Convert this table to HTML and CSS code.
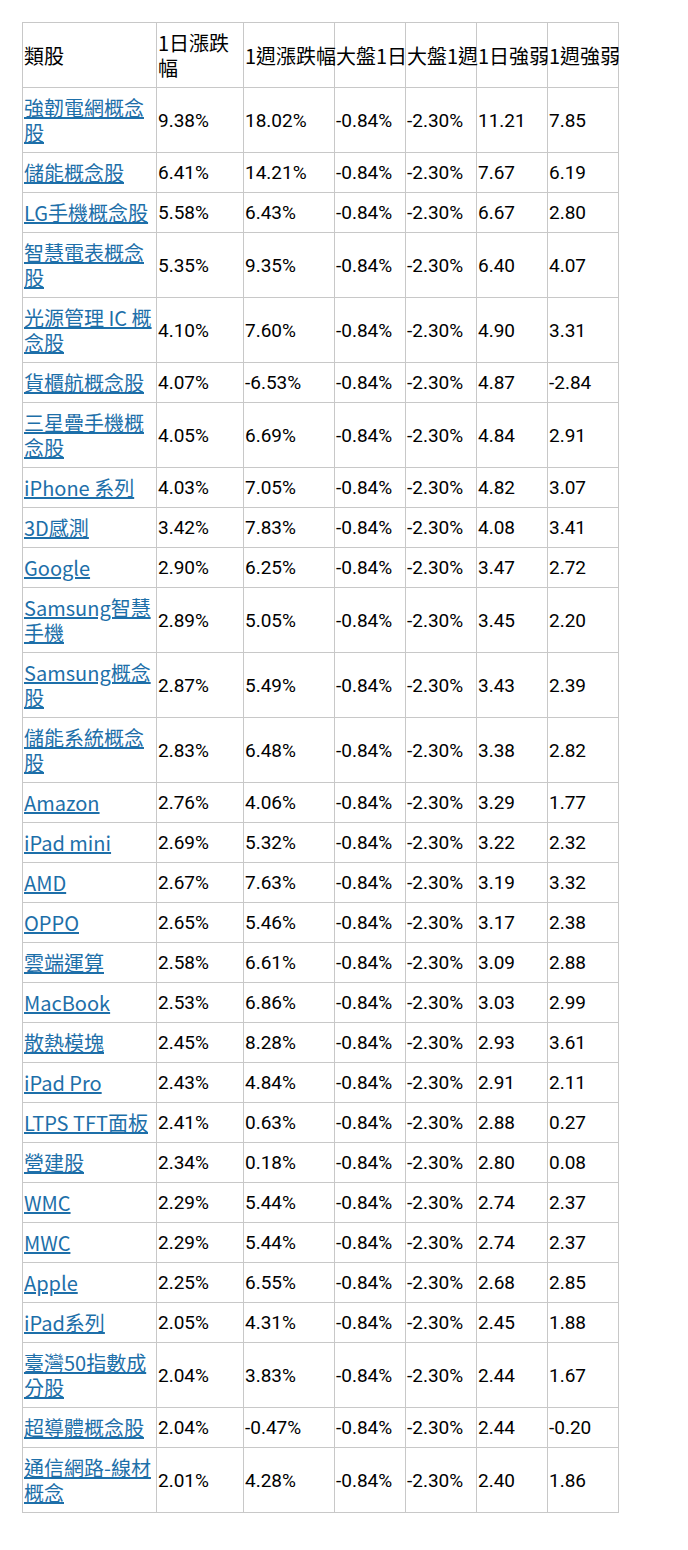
FILE: index.html
```html
<!DOCTYPE html>
<html lang="zh-Hant">
<head>
<meta charset="utf-8">
<title>類股強弱</title>
<link rel="stylesheet" href="styles.css">
</head>
<body>
<div class="page">
<table class="sector-table">
<colgroup>
<col class="c-name"><col class="c-d1"><col class="c-w1"><col class="c-s"><col class="c-s"><col class="c-s"><col class="c-s">
</colgroup>
<thead>
<tr><th>類股</th><th class="wrap">1日漲跌幅</th><th>1週漲跌幅</th><th>大盤1日</th><th>大盤1週</th><th>1日強弱</th><th>1週強弱</th></tr>
</thead>
<tbody>
<tr><td><a href="#">強韌電網概念股</a></td><td>9.38%</td><td>18.02%</td><td>-0.84%</td><td>-2.30%</td><td>11.21</td><td>7.85</td></tr>
<tr><td><a href="#">儲能概念股</a></td><td>6.41%</td><td>14.21%</td><td>-0.84%</td><td>-2.30%</td><td>7.67</td><td>6.19</td></tr>
<tr><td><a href="#">LG手機概念股</a></td><td>5.58%</td><td>6.43%</td><td>-0.84%</td><td>-2.30%</td><td>6.67</td><td>2.80</td></tr>
<tr><td><a href="#">智慧電表概念股</a></td><td>5.35%</td><td>9.35%</td><td>-0.84%</td><td>-2.30%</td><td>6.40</td><td>4.07</td></tr>
<tr><td><a href="#">光源管理 IC 概念股</a></td><td>4.10%</td><td>7.60%</td><td>-0.84%</td><td>-2.30%</td><td>4.90</td><td>3.31</td></tr>
<tr><td><a href="#">貨櫃航概念股</a></td><td>4.07%</td><td>-6.53%</td><td>-0.84%</td><td>-2.30%</td><td>4.87</td><td>-2.84</td></tr>
<tr><td><a href="#">三星疊手機概念股</a></td><td>4.05%</td><td>6.69%</td><td>-0.84%</td><td>-2.30%</td><td>4.84</td><td>2.91</td></tr>
<tr><td><a href="#">iPhone 系列</a></td><td>4.03%</td><td>7.05%</td><td>-0.84%</td><td>-2.30%</td><td>4.82</td><td>3.07</td></tr>
<tr><td><a href="#">3D感測</a></td><td>3.42%</td><td>7.83%</td><td>-0.84%</td><td>-2.30%</td><td>4.08</td><td>3.41</td></tr>
<tr><td><a href="#">Google</a></td><td>2.90%</td><td>6.25%</td><td>-0.84%</td><td>-2.30%</td><td>3.47</td><td>2.72</td></tr>
<tr><td><a href="#">Samsung智慧手機</a></td><td>2.89%</td><td>5.05%</td><td>-0.84%</td><td>-2.30%</td><td>3.45</td><td>2.20</td></tr>
<tr><td><a href="#">Samsung概念股</a></td><td>2.87%</td><td>5.49%</td><td>-0.84%</td><td>-2.30%</td><td>3.43</td><td>2.39</td></tr>
<tr><td><a href="#">儲能系統概念股</a></td><td>2.83%</td><td>6.48%</td><td>-0.84%</td><td>-2.30%</td><td>3.38</td><td>2.82</td></tr>
<tr><td><a href="#">Amazon</a></td><td>2.76%</td><td>4.06%</td><td>-0.84%</td><td>-2.30%</td><td>3.29</td><td>1.77</td></tr>
<tr><td><a href="#">iPad mini</a></td><td>2.69%</td><td>5.32%</td><td>-0.84%</td><td>-2.30%</td><td>3.22</td><td>2.32</td></tr>
<tr><td><a href="#">AMD</a></td><td>2.67%</td><td>7.63%</td><td>-0.84%</td><td>-2.30%</td><td>3.19</td><td>3.32</td></tr>
<tr><td><a href="#">OPPO</a></td><td>2.65%</td><td>5.46%</td><td>-0.84%</td><td>-2.30%</td><td>3.17</td><td>2.38</td></tr>
<tr><td><a href="#">雲端運算</a></td><td>2.58%</td><td>6.61%</td><td>-0.84%</td><td>-2.30%</td><td>3.09</td><td>2.88</td></tr>
<tr><td><a href="#">MacBook</a></td><td>2.53%</td><td>6.86%</td><td>-0.84%</td><td>-2.30%</td><td>3.03</td><td>2.99</td></tr>
<tr><td><a href="#">散熱模塊</a></td><td>2.45%</td><td>8.28%</td><td>-0.84%</td><td>-2.30%</td><td>2.93</td><td>3.61</td></tr>
<tr><td><a href="#">iPad Pro</a></td><td>2.43%</td><td>4.84%</td><td>-0.84%</td><td>-2.30%</td><td>2.91</td><td>2.11</td></tr>
<tr><td><a href="#">LTPS TFT面板</a></td><td>2.41%</td><td>0.63%</td><td>-0.84%</td><td>-2.30%</td><td>2.88</td><td>0.27</td></tr>
<tr><td><a href="#">營建股</a></td><td>2.34%</td><td>0.18%</td><td>-0.84%</td><td>-2.30%</td><td>2.80</td><td>0.08</td></tr>
<tr><td><a href="#">WMC</a></td><td>2.29%</td><td>5.44%</td><td>-0.84%</td><td>-2.30%</td><td>2.74</td><td>2.37</td></tr>
<tr><td><a href="#">MWC</a></td><td>2.29%</td><td>5.44%</td><td>-0.84%</td><td>-2.30%</td><td>2.74</td><td>2.37</td></tr>
<tr><td><a href="#">Apple</a></td><td>2.25%</td><td>6.55%</td><td>-0.84%</td><td>-2.30%</td><td>2.68</td><td>2.85</td></tr>
<tr><td><a href="#">iPad系列</a></td><td>2.05%</td><td>4.31%</td><td>-0.84%</td><td>-2.30%</td><td>2.45</td><td>1.88</td></tr>
<tr><td><a href="#">臺灣50指數成分股</a></td><td>2.04%</td><td>3.83%</td><td>-0.84%</td><td>-2.30%</td><td>2.44</td><td>1.67</td></tr>
<tr><td><a href="#">超導體概念股</a></td><td>2.04%</td><td>-0.47%</td><td>-0.84%</td><td>-2.30%</td><td>2.44</td><td>-0.20</td></tr>
<tr><td><a href="#">通信網路-線材概念</a></td><td>2.01%</td><td>4.28%</td><td>-0.84%</td><td>-2.30%</td><td>2.40</td><td>1.86</td></tr>
</tbody>
</table>
</div>
</body>
</html>
```

FILE: styles.css
```css
html, body {
  margin: 0;
  padding: 0;
  background: #ffffff;
}

.page {
  padding: 22px 0 0 22px;
}

.sector-table {
  border-collapse: collapse;
  table-layout: fixed;
  width: 597px;
  font-family: "Noto Sans CJK TC", "Noto Sans", sans-serif;
  font-size: 20px;
  line-height: 25px;
  color: #000;
}

.c-name { width: 134px; }
.c-d1 { width: 87px; }
.c-w1 { width: 91px; }
.c-s { width: 71px; }

.sector-table th,
.sector-table td {
  border: 1px solid #c8c8c8;
  padding: 7px 1px;
  text-align: left;
  vertical-align: middle;
  font-weight: normal;
}

.sector-table td {
  font-family: Roboto, "Noto Sans CJK TC", sans-serif;
  font-size: 19px;
}

.sector-table td:first-child {
  font-family: "Noto Sans CJK TC", "Noto Sans", sans-serif;
  font-size: 20px;
}

.sector-table th {
  white-space: nowrap;
}

.sector-table th.wrap {
  white-space: normal;
}

.sector-table a {
  color: #1d6fa9;
  text-decoration: underline;
}
```
